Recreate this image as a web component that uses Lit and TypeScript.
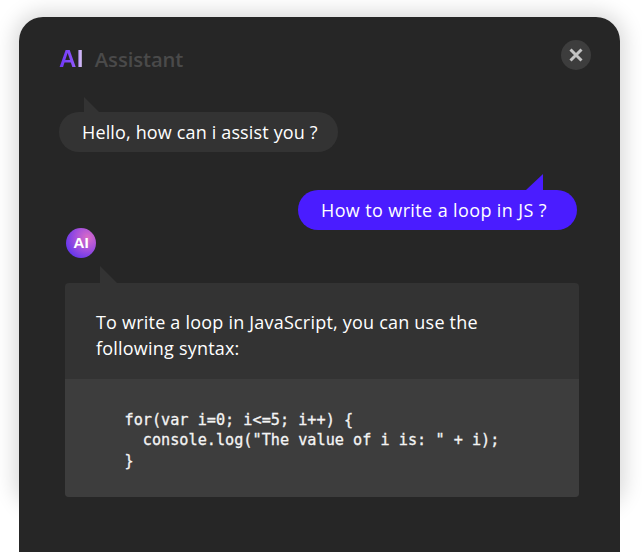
import { LitElement, html, css } from "lit";
import { customElement } from "lit/decorators.js";

@customElement("app-root")
export class AppRoot extends LitElement {
  static styles = css`
    :host { display: block; width: 642px; height: 554px; overflow: hidden; background: #fff; font-family: "Open Sans", "Noto Sans", sans-serif; }
    .page { position: relative; padding: 17px 22px 0 19px; }
    .glow { position: absolute; left: 19px; right: 22px; top: 17px; height: 488px; border-radius: 24px; box-shadow: 0 0 20px 5px rgba(0,0,0,.15); }
    .card { position: relative; box-sizing: border-box; height: 535px; background: #262626; border-radius: 24px 24px 0 0; padding: 23px 29px 0 40px; display: flex; flex-direction: column; align-items: flex-start; }
    .header { align-self: stretch; height: 30px; display: flex; align-items: center; justify-content: space-between; }
    .brand { display: flex; align-items: center; gap: 11px; padding-top: 8px; }
    .ai { font: 700 24px/30px "Liberation Sans", sans-serif; letter-spacing: 0.4px; background: linear-gradient(90deg, #6c34f8 0%, #8d55fb 60%, #efe4f8 100%); -webkit-background-clip: text; background-clip: text; color: transparent; }
    .title { font-size: 20.3px; line-height: 30px; font-weight: 600; color: #4a4a4a; letter-spacing: -0.1px; }
    .close { width: 30px; height: 30px; border-radius: 50%; background: #3d3d3d; display: flex; align-items: center; justify-content: center; }
    .bubble { position: relative; box-sizing: border-box; height: 40px; border-radius: 20px; display: flex; align-items: center; font-size: 18px; letter-spacing: 0.15px; color: #fff; white-space: nowrap; }
    .bot { width: 279px; margin-top: 42px; padding-left: 23px; background: #333; }
    .bot::before { content: ""; position: absolute; left: 25px; top: -15px; width: 15px; height: 15px; background: #333; clip-path: polygon(0 0, 100% 100%, 0 100%); }
    .me { width: 279px; margin-top: 38px; align-self: flex-end; margin-right: 14px; padding-left: 23px; background: #4a1cff; letter-spacing: 0.38px; }
    .me::before { content: ""; position: absolute; left: 228px; top: -16px; width: 17px; height: 16px; background: #4a1cff; clip-path: polygon(100% 0, 100% 100%, 0 100%); }
    .avatar { width: 30px; height: 30px; margin: -2px 0 0 7px; border-radius: 50%; background: radial-gradient(circle at 72% 32%, #d96cc6 0%, #a550dc 40%, #5a32ee 85%); color: #fff; display: flex; align-items: center; justify-content: center; font: 700 15.5px/1 "Liberation Sans", sans-serif; }
    .answer { position: relative; margin: 25px 0 0 6px; width: 514px; border-radius: 4px; background: #333; }
    .answer::before { content: ""; position: absolute; left: 35px; top: -17px; width: 17px; height: 17px; background: #333; clip-path: polygon(0 0, 100% 100%, 0 100%); }
    .text { box-sizing: border-box; height: 96px; padding: 26px 90px 0 31px; font-size: 18px; letter-spacing: 0.21px; line-height: 26px; color: #fff; }
    .code { box-sizing: border-box; height: 118px; padding: 31px 0 0 59.5px; background: #3d3d3d; border-radius: 0 0 4px 4px; font: 400 15.2px/20.3px "DejaVu Sans Mono", monospace; color: #f4f4f4; -webkit-text-stroke: 0.3px #f4f4f4; white-space: pre; }
  `;

  render() {
    return html`<div class="page">
      <div class="glow"></div>
      <div class="card">
        <div class="header">
          <div class="brand"><span class="ai">AI</span><span class="title">Assistant</span></div>
          <div class="close">
            <svg width="14" height="14" viewBox="0 0 14 14"><path d="M1.5 1.5 12.5 12.5M12.5 1.5 1.5 12.5" stroke="#c4c4c4" stroke-width="3" fill="none"/></svg>
          </div>
        </div>
        <div class="bubble bot">Hello, how can i assist you ?</div>
        <div class="bubble me">How to write a loop in JS ?</div>
        <div class="avatar">AI</div>
        <div class="answer">
          <div class="text">To write a loop in JavaScript, you can use the following syntax:</div>
          <div class="code">for(var i=0; i&lt;=5; i++) {
  console.log("The value of i is: " + i);
}</div>
        </div>
      </div>
    </div>`;
  }
}
